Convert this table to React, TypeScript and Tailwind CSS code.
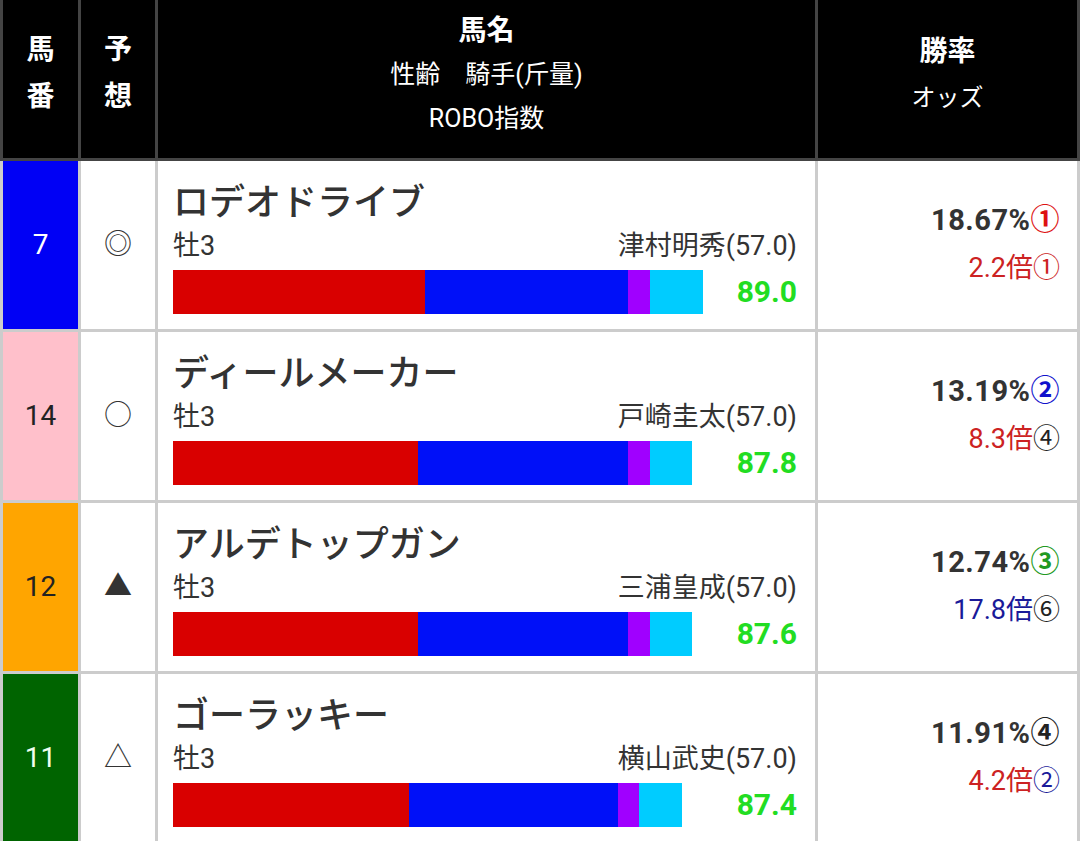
import React from 'react';

type Row = {
  no: string;
  noClass: string;
  mark: string;
  name: string;
  sex: string;
  jockey: string;
  score: string;
  bars: number[];
  pct: string;
  pctRank: string;
  pctRankClass: string;
  odds: string;
  oddsClass: string;
  oddsRank: string;
  oddsRankClass: string;
};

const BAR_COLORS = ['#d90000', '#0010f8', '#a000ff', '#00ccff'];

const ROWS: Row[] = [
  {
    no: '7', noClass: 'bg-[#0000f5] text-white', mark: '◎', name: 'ロデオドライブ', sex: '牡3',
    jockey: '津村明秀(57.0)', score: '89.0', bars: [252, 203, 22, 53],
    pct: '18.67%', pctRank: '①', pctRankClass: 'text-[#dd1111]',
    odds: '2.2倍', oddsClass: 'text-[#cc2222]', oddsRank: '①', oddsRankClass: 'text-[#cc2222]',
  },
  {
    no: '14', noClass: 'bg-[#ffc0cb] text-[#222]', mark: '○', name: 'ディールメーカー', sex: '牡3',
    jockey: '戸崎圭太(57.0)', score: '87.8', bars: [245, 210, 22, 42],
    pct: '13.19%', pctRank: '②', pctRankClass: 'text-[#1111cc]',
    odds: '8.3倍', oddsClass: 'text-[#cc2222]', oddsRank: '④', oddsRankClass: 'text-[#222]',
  },
  {
    no: '12', noClass: 'bg-[#ffa500] text-[#222]', mark: '▲', name: 'アルデトップガン', sex: '牡3',
    jockey: '三浦皇成(57.0)', score: '87.6', bars: [245, 210, 22, 42],
    pct: '12.74%', pctRank: '③', pctRankClass: 'text-[#229922]',
    odds: '17.8倍', oddsClass: 'text-[#1a1a99]', oddsRank: '⑥', oddsRankClass: 'text-[#222]',
  },
  {
    no: '11', noClass: 'bg-[#006400] text-[#f0fff0]', mark: '△', name: 'ゴーラッキー', sex: '牡3',
    jockey: '横山武史(57.0)', score: '87.4', bars: [236, 209, 21, 43],
    pct: '11.91%', pctRank: '④', pctRankClass: 'text-[#222]',
    odds: '4.2倍', oddsClass: 'text-[#cc2222]', oddsRank: '②', oddsRankClass: 'text-[#1a1a99]',
  },
];

const COLS = 'grid grid-cols-[75px_74px_657px_259px] gap-x-[3px] px-[3px]';

const App: React.FC = () => {
  return (
    <div className="w-[1080px] h-[841px] overflow-hidden bg-white font-['Roboto','Noto_Sans_CJK_JP',sans-serif]">
      {/* Header */}
      <div className={`${COLS} bg-[#444] pb-[3px]`}>
        <div className="h-[158px] bg-black text-white font-bold text-[28px] flex flex-col items-center justify-center pb-[12px]">
          <div className="leading-[47px]">馬</div>
          <div className="leading-[47px]">番</div>
        </div>
        <div className="h-[158px] bg-black text-white font-bold text-[28px] flex flex-col items-center justify-center pb-[12px]">
          <div className="leading-[47px]">予</div>
          <div className="leading-[47px]">想</div>
        </div>
        <div className="h-[158px] bg-black text-white flex flex-col items-center justify-center pb-[8px]">
          <div className="leading-[44px] text-[28px] font-bold">馬名</div>
          <div className="leading-[44px] text-[25px]">性齢　騎手(斤量)</div>
          <div className="leading-[44px] text-[25px]">ROBO指数</div>
        </div>
        <div className="h-[158px] bg-black text-white flex flex-col items-center justify-center pb-[8px]">
          <div className="leading-[46px] text-[28px] font-bold">勝率</div>
          <div className="leading-[46px] text-[24px]">オッズ</div>
        </div>
      </div>

      {/* Body */}
      <div className={`${COLS} gap-y-[3px] bg-[#cccccc]`}>
        {ROWS.map(r => (
          <React.Fragment key={r.no}>
            <div className={`h-[168px] flex items-center justify-center text-[28px] ${r.noClass}`}>{r.no}</div>
            <div className="h-[168px] bg-white flex items-center justify-center text-[28px] text-[#333]">{r.mark}</div>
            <div className="h-[168px] bg-white pt-[22px] pl-[15px] pr-[18px] text-[#333]">
              <div className="leading-[40px] text-[36px] font-medium">{r.name}</div>
              <div className="flex justify-between mt-[7px] leading-[32px] text-[27px]">
                <span>{r.sex}</span>
                <span>{r.jockey}</span>
              </div>
              <div className="flex items-center mt-[8px]">
                <div className="flex h-[44px]">
                  {r.bars.map((w, i) => (
                    <div key={i} style={{ width: w, backgroundColor: BAR_COLORS[i] }} />
                  ))}
                </div>
                <div className="ml-auto text-[30px] font-bold text-[#22dd22] leading-[44px]">{r.score}</div>
              </div>
            </div>
            <div className="h-[168px] bg-white flex flex-col items-end justify-center pr-[17px] pb-[4px]">
              <div className="leading-[40px] text-[29px] font-bold text-[#333] tracking-[0.5px]">
                {r.pct}<span className={r.pctRankClass}>{r.pctRank}</span>
              </div>
              <div className={`mt-[10px] leading-[36px] text-[27px] ${r.oddsClass}`}>
                {r.odds}<span className={r.oddsRankClass}>{r.oddsRank}</span>
              </div>
            </div>
          </React.Fragment>
        ))}
      </div>
    </div>
  );
};

export default App;
